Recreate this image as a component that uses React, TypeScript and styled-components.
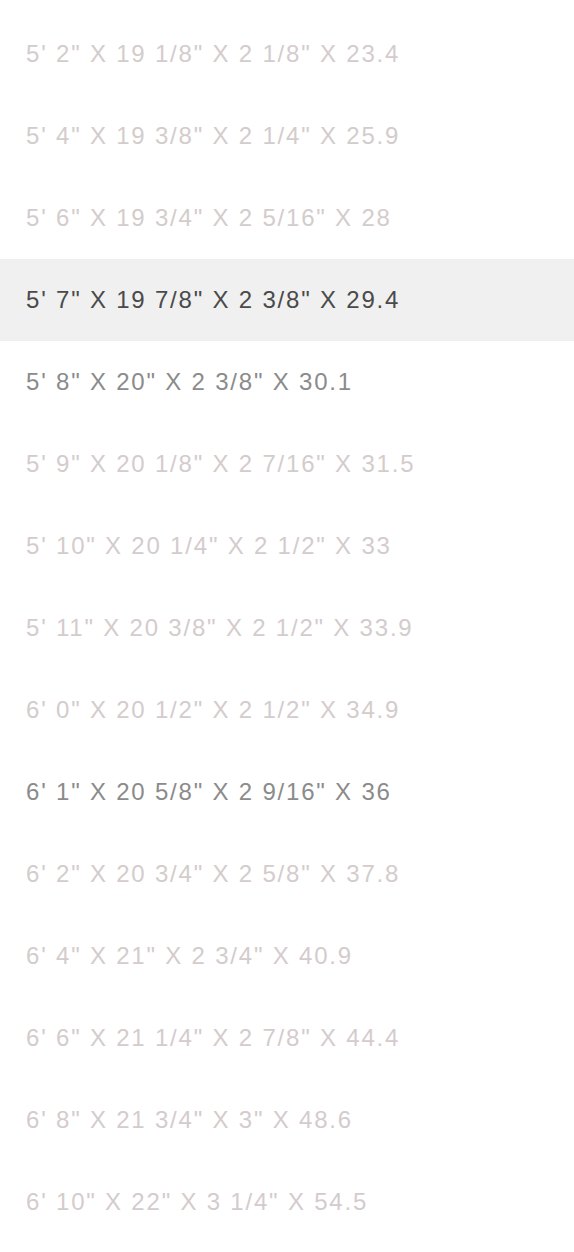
import React from 'react'
import styled, {createGlobalStyle} from 'styled-components'

type Tone = 'muted' | 'available' | 'selected'

interface SizeOption {
  label: string
  tone: Tone
}

const sizes: SizeOption[] = [
  {label: `5' 2" X 19 1/8" X 2 1/8" X 23.4`, tone: 'muted'},
  {label: `5' 4" X 19 3/8" X 2 1/4" X 25.9`, tone: 'muted'},
  {label: `5' 6" X 19 3/4" X 2 5/16" X 28`, tone: 'muted'},
  {label: `5' 7" X 19 7/8" X 2 3/8" X 29.4`, tone: 'selected'},
  {label: `5' 8" X 20" X 2 3/8" X 30.1`, tone: 'available'},
  {label: `5' 9" X 20 1/8" X 2 7/16" X 31.5`, tone: 'muted'},
  {label: `5' 10" X 20 1/4" X 2 1/2" X 33`, tone: 'muted'},
  {label: `5' 11" X 20 3/8" X 2 1/2" X 33.9`, tone: 'muted'},
  {label: `6' 0" X 20 1/2" X 2 1/2" X 34.9`, tone: 'muted'},
  {label: `6' 1" X 20 5/8" X 2 9/16" X 36`, tone: 'available'},
  {label: `6' 2" X 20 3/4" X 2 5/8" X 37.8`, tone: 'muted'},
  {label: `6' 4" X 21" X 2 3/4" X 40.9`, tone: 'muted'},
  {label: `6' 6" X 21 1/4" X 2 7/8" X 44.4`, tone: 'muted'},
  {label: `6' 8" X 21 3/4" X 3" X 48.6`, tone: 'muted'},
  {label: `6' 10" X 22" X 3 1/4" X 54.5`, tone: 'muted'},
]

const toneColor: Record<Tone, string> = {
  muted: '#d4cccc',
  available: '#8b8b8b',
  selected: '#4a4a4a',
}

const GlobalStyle = createGlobalStyle`
  html, body {
    margin: 0;
    padding: 0;
    background: #ffffff;
  }
  body {
    font-family: "Liberation Sans", Arial, sans-serif;
  }
`

const App: React.FC = () => {
  return (
    <>
      <GlobalStyle />
      <StyledList>
        {sizes.map((size) => (
          <StyledRow key={size.label} $tone={size.tone}>
            {size.label}
          </StyledRow>
        ))}
      </StyledList>
    </>
  )
}

const StyledList = styled.ul`
  list-style: none;
  margin: 0;
  padding: 13px 0 0;
  display: flex;
  flex-direction: column;
`

const StyledRow = styled.li<{$tone: Tone}>`
  height: 82px;
  display: flex;
  align-items: center;
  padding: 0 26px;
  font-size: 24px;
  letter-spacing: 1.8px;
  color: ${(props) => toneColor[props.$tone]};
  background: ${(props) => (props.$tone === 'selected' ? '#f0f0f0' : 'transparent')};
  cursor: pointer;
  white-space: nowrap;
`

export default App
